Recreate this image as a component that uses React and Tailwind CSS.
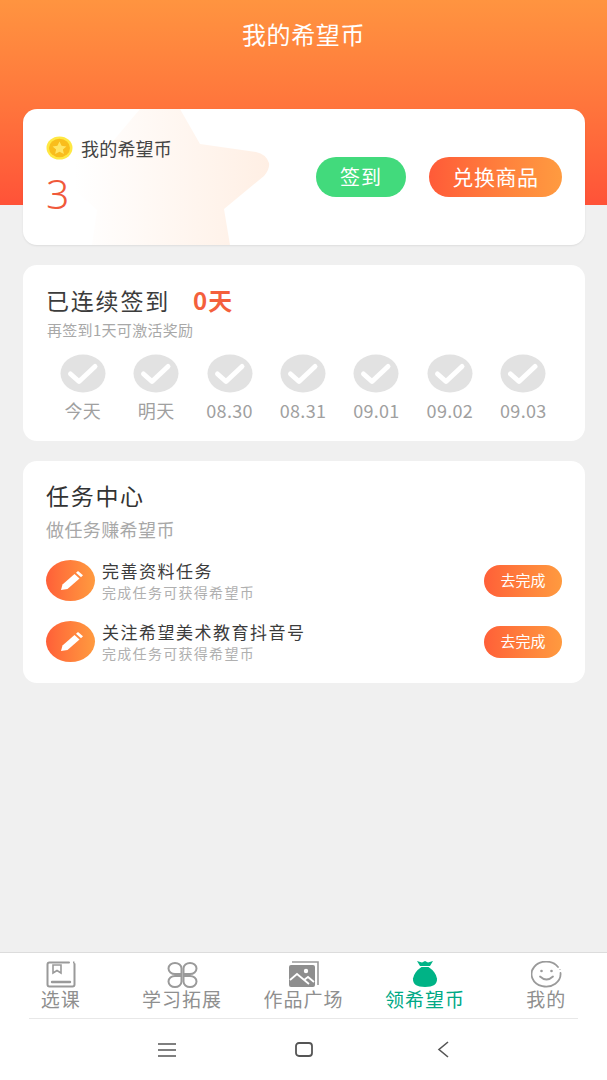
import React from "react";

const FONT = { fontFamily: '"Noto Sans CJK SC", "Noto Sans", sans-serif' };
const days = ["今天", "明天", "08.30", "08.31", "09.01", "09.02", "09.03"];
const tasks = ["完善资料任务", "关注希望美术教育抖音号"];

const CheckDot = () => (
  <svg width="46" height="39" viewBox="0 0 46 39">
    <ellipse cx="23" cy="19.5" rx="22.5" ry="19" fill="#e2e2e2" />
    <path d="M10.5 20 L19 27.5 L35 12.5" fill="none" stroke="#fff" strokeWidth="5" strokeLinecap="round" strokeLinejoin="round" />
  </svg>
);

const Coin = () => (
  <svg width="27" height="24" viewBox="0 0 27 24">
    <ellipse cx="13.5" cy="12" rx="13" ry="11.5" fill="#ffe843" />
    <ellipse cx="13.5" cy="12" rx="10.5" ry="9.2" fill="#f9bd1c" />
    <path d="M13.5 5.5 L15.6 9.8 L20.4 10.4 L16.9 13.5 L17.9 18 L13.5 15.7 L9.1 18 L10.1 13.5 L6.6 10.4 L11.4 9.8 Z" fill="#ffe564" />
  </svg>
);

const Star = () => (
  <svg className="absolute left-0 top-0" width="300" height="136" viewBox="0 0 300 136">
    <defs>
      <linearGradient id="starFill" x1="0" x2="1" y1="0" y2="0">
        <stop offset="0.1" stopColor="#ffffff" />
        <stop offset="1" stopColor="#ffefe4" />
      </linearGradient>
    </defs>
    <path
      d="M117 0 L157 0 L177 35 L233 43 Q243 45 246 54 Q247 60 241 67 L201 100 L207 136 L69 136 L74 101 L33 64 L30 52 L50 42 L85 38 Z"
      fill="url(#starFill)"
    />
  </svg>
);

const PencilBadge = () => (
  <div className="flex h-[41px] w-[49px] shrink-0 items-center justify-center rounded-[50%] bg-gradient-to-r from-[#ff5f38] to-[#ff9a3f]">
    <svg width="26" height="24" viewBox="0 0 26 24">
      <path d="M3 21 L4.5 15.5 L16.5 5 L21.5 9.5 L9.5 20 Z" fill="#fff" />
      <path d="M18 3.7 L20 2 L25 6.2 L23 8.2 Z" fill="#fff" />
    </svg>
  </div>
);

const TabIcon = ({ name }) => {
  if (name === "book") {
    return (
      <svg width="30" height="27" viewBox="0 0 30 27" fill="none" stroke="#9a9a9a" strokeWidth="2">
        <path d="M23 1.5 H3.5 Q1.5 1.5 1.5 3.5 V23.5 Q1.5 25.5 3.5 25.5 H26.5 Q28.5 25.5 28.5 23.5 V3" strokeLinecap="round" />
        <path d="M7 4 V12 L11 9.5 L15 12 V4 Z" strokeWidth="1.6" />
        <path d="M6 21 H24" strokeWidth="2.4" strokeLinecap="round" />
        <path d="M27 1.5 H28.5" />
      </svg>
    );
  }
  if (name === "clover") {
    return (
      <svg width="31" height="26" viewBox="0 0 31 26" fill="none" stroke="#9a9a9a" strokeWidth="2">
        <path d="M14.5 12 H8 A6.5 5.5 0 1 1 14.5 6.5 Z" />
        <path d="M16.5 12 H23 A6.5 5.5 0 1 0 16.5 6.5 Z" />
        <path d="M14.5 14 H8 A6.5 5.5 0 1 0 14.5 19.5 Z" />
        <path d="M16.5 14 H23 A6.5 5.5 0 1 1 16.5 19.5 Z" />
      </svg>
    );
  }
  if (name === "picture") {
    return (
      <svg width="31" height="27" viewBox="0 0 31 27">
        <path d="M4 1 H30 V24" fill="none" stroke="#9a9a9a" strokeWidth="1.6" />
        <rect x="1" y="4" width="26" height="22" rx="2" fill="#8e8e8e" />
        <circle cx="18" cy="10" r="2.2" fill="#fff" />
        <path d="M2 19 L9 13 L21 23 M16 19 L20 16 L26 21" fill="none" stroke="#fff" strokeWidth="1.8" />
      </svg>
    );
  }
  if (name === "bag") {
    return (
      <svg width="26" height="28" viewBox="0 0 26 28">
        <path d="M5 1 L10 2.5 L13 1 L16 2.5 L21 1 L18 6 H8 Z" fill="#00b386" />
        <path d="M9.5 7 H16.5 Q24 12 25 18.5 Q25.5 27 13 27 Q0.5 27 1 18.5 Q2 12 9.5 7 Z" fill="#00b386" />
      </svg>
    );
  }
  return (
    <svg width="31" height="27" viewBox="0 0 31 27" fill="none" stroke="#9a9a9a" strokeWidth="1.8">
      <path d="M27 6 A14.5 12.5 0 1 0 29.5 12" strokeLinecap="round" />
      <path d="M9 15.5 Q15.5 21.5 22 15.5" strokeLinecap="round" />
      <ellipse cx="10.5" cy="10" rx="1.3" ry="1.3" fill="#9a9a9a" stroke="none" />
      <ellipse cx="20.5" cy="10" rx="1.3" ry="1.3" fill="#9a9a9a" stroke="none" />
      <circle cx="29" cy="8.5" r="0.6" fill="#9a9a9a" stroke="none" />
    </svg>
  );
};

const tabs = [
  { label: "选课", icon: "book" },
  { label: "学习拓展", icon: "clover" },
  { label: "作品广场", icon: "picture" },
  { label: "领希望币", icon: "bag", active: true },
  { label: "我的", icon: "smile" },
];

export default function App() {
  return (
    <div className="flex h-[1080px] w-[607px] flex-col overflow-hidden bg-[#f0f0f0]" style={FONT}>
      {/* Header */}
      <div className="h-[205px] shrink-0 bg-gradient-to-b from-[#ff9440] to-[#ff5238] pt-[18px] text-center text-[24px] leading-[32px] tracking-[0.6px] text-white">
        我的希望币
      </div>

      <div className="-mt-[96px] flex flex-1 flex-col gap-5 pl-[23px] pr-[22px]">
        {/* Balance card */}
        <div className="relative flex h-[136px] items-center justify-between overflow-hidden rounded-[14px] bg-white px-[23px] shadow-[0_1px_2px_rgba(0,0,0,0.08)]">
          <Star />
          <div className="relative -mt-[1px]">
            <div className="flex items-center gap-[8px]">
              <Coin />
              <span className="text-[18px] leading-[24px] tracking-[0.2px] text-[#444]">我的希望币</span>
            </div>
            <div className="mt-[9px] text-[41px] leading-[48px] text-[#f0593a]" style={{ fontFamily: '"Noto Sans", sans-serif', fontWeight: 300 }}>3</div>
          </div>
          <div className="relative -mt-[1px] flex gap-[23px]">
            <button className="h-[40px] w-[90px] rounded-[20px] bg-[#42da7c] text-[20px] tracking-[1px] text-white">签到</button>
            <button className="h-[40px] w-[133px] rounded-[20px] bg-gradient-to-r from-[#ff5a38] to-[#ff9b40] text-[21px] tracking-[0.6px] text-white">兑换商品</button>
          </div>
        </div>

        {/* Streak card */}
        <div className="h-[176px] rounded-[14px] bg-white px-[24px] pt-[20px]">
          <div className="flex items-center text-[23px] leading-[30px] tracking-[1.8px] text-[#3c3c3c]">
            <span className="-ml-[1px]">已连续签到</span>
            <span className="ml-[23px] text-[24px] font-bold tracking-[1px] text-[#f4603c]">0天</span>
          </div>
          <div className="mt-[5px] text-[15px] leading-[20px] tracking-[0.3px] text-[#a8a8a8]">再签到1天可激活奖励</div>
          <div className="mt-[14px] -ml-[1px] grid w-[514px] grid-cols-7">
            {days.map((d) => (
              <div key={d} className="flex flex-col items-center">
                <CheckDot />
                <span className="mt-[5px] text-[18px] leading-[24px] tracking-[0.3px] text-[#a0a0a0]">{d}</span>
              </div>
            ))}
          </div>
        </div>

        {/* Task card */}
        <div className="h-[222px] rounded-[14px] bg-white px-[23px] pt-[18px]">
          <div className="text-[23px] leading-[32px] tracking-[1.7px] text-[#333]">任务中心</div>
          <div className="mt-[5px] text-[18px] leading-[26px] tracking-[0.4px] text-[#a8a8a8]">做任务赚希望币</div>
          <div className="mt-[18px] flex flex-col gap-[20px]">
            {tasks.map((t) => (
              <div key={t} className="flex h-[41px] items-center">
                <PencilBadge />
                <div className="ml-[7px] flex-1">
                  <div className="text-[17px] leading-[22px] tracking-[1.5px] text-[#3c3c3c]">{t}</div>
                  <div className="text-[14px] leading-[20px] tracking-[1.3px] text-[#b0b0b0]">完成任务可获得希望币</div>
                </div>
                <button className="h-[32px] w-[78px] rounded-[16px] bg-gradient-to-r from-[#ff5f38] to-[#ff9a3f] text-[15px] text-white">去完成</button>
              </div>
            ))}
          </div>
        </div>
      </div>

      {/* Bottom tab bar */}
      <div className="h-[66px] shrink-0 border-t border-[#dcdcdc] bg-white">
        <div className="grid grid-cols-5">
          {tabs.map((t) => (
            <div key={t.label} className="flex flex-col items-center pt-[7px]">
              <div className="flex h-[28px] items-end"><TabIcon name={t.icon} /></div>
              <span className={`text-[19px] leading-[22px] tracking-[1px] ${t.active ? "text-[#00a985]" : "text-[#8f8f8f]"}`}>{t.label}</span>
            </div>
          ))}
        </div>
      </div>

      {/* Android nav */}
      <div className="h-[62px] shrink-0 bg-white">
        <div className="mx-[29px] h-px bg-[#e8e8e8]" />
        <div className="flex h-[61px] items-center pl-[158px]">
          <svg width="18" height="14" viewBox="0 0 18 14" stroke="#555" strokeWidth="1.6">
            <path d="M0 1 H18 M0 7 H18 M0 13 H18" />
          </svg>
          <svg className="ml-[119px]" width="18" height="15" viewBox="0 0 18 15" fill="none" stroke="#555" strokeWidth="1.8">
            <rect x="1" y="1" width="16" height="13" rx="3" />
          </svg>
          <svg className="ml-[124px]" width="12" height="17" viewBox="0 0 12 17" fill="none" stroke="#555" strokeWidth="1.6">
            <path d="M11 1 L2 8.5 L11 16" />
          </svg>
        </div>
      </div>
    </div>
  );
}
